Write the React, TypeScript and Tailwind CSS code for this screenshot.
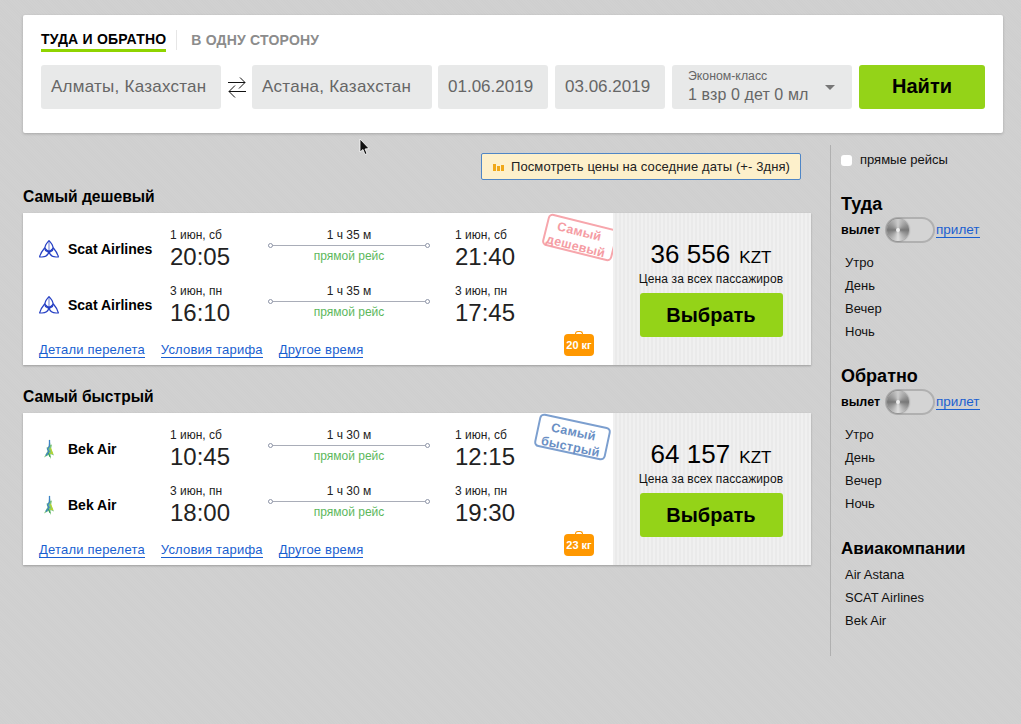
import React from 'react';

type Leg = {
  depDate: string;
  depTime: string;
  duration: string;
  arrDate: string;
  arrTime: string;
};

type Offer = {
  title: string;
  airline: string;
  logo: 'scat' | 'bek';
  legs: Leg[];
  price: string;
  baggage: string;
  stamp: string[];
  stampClass: string;
};

const offers: Offer[] = [
  {
    title: 'Самый дешевый',
    airline: 'Scat Airlines',
    logo: 'scat',
    price: '36 556',
    baggage: '20 кг',
    stamp: ['Самый', 'дешевый'],
    stampClass: 'rotate-[14deg] border-[#f7a6ac] text-[#f59ca3] left-[521px] top-[8px] w-[72px] h-[33px] pt-[5px] pr-[4px]',
    legs: [
      { depDate: '1 июн, сб', depTime: '20:05', duration: '1 ч 35 м', arrDate: '1 июн, сб', arrTime: '21:40' },
      { depDate: '3 июн, пн', depTime: '16:10', duration: '1 ч 35 м', arrDate: '3 июн, пн', arrTime: '17:45' },
    ],
  },
  {
    title: 'Самый быстрый',
    airline: 'Bek Air',
    logo: 'bek',
    price: '64 157',
    baggage: '23 кг',
    stamp: ['Самый', 'быстрый'],
    stampClass: 'rotate-[12deg] border-[#7c9fcf] text-[#6a8fc4] left-[513px] top-[7px] w-[73px] h-[34px] pt-[6px]',
    legs: [
      { depDate: '1 июн, сб', depTime: '10:45', duration: '1 ч 30 м', arrDate: '1 июн, сб', arrTime: '12:15' },
      { depDate: '3 июн, пн', depTime: '18:00', duration: '1 ч 30 м', arrDate: '3 июн, пн', arrTime: '19:30' },
    ],
  },
];

const ScatLogo = () => (
  <svg width="20" height="18" viewBox="0 0 20 18" fill="none" stroke="#2640c4" strokeWidth="1.2">
    <path d="M10 0.6 C13.4 4 14.8 8 13.4 10.6 L10 12.6 L6.6 10.6 C5.2 8 6.6 4 10 0.6 Z" />
    <path d="M10 12 L5.6 8 C3.4 10.6 1.4 13.6 0.6 16.8 C4.6 17.4 8.6 16.8 10 12 Z" />
    <path d="M10 12 L14.4 8 C16.6 10.6 18.6 13.6 19.4 16.8 C15.4 17.4 11.4 16.8 10 12 Z" />
    <path d="M10 1 V12 M6.6 10.6 L13.4 10.6" strokeWidth="0.7" />
  </svg>
);

const BekLogo = () => (
  <svg width="12" height="22" viewBox="0 0 12 22" fill="none">
    <path d="M6.5 1 L7.5 7 L9 6.5 L8 11 L11 17.5 L7.5 16 L8 21 L5.5 17 L1 19.5 L4.5 13 L3.5 9.5 L5.5 9 Z" fill="#7cc47a" />
    <path d="M6.5 2 L6.5 8 L4.5 11 L6 13.5 L3 17.5" stroke="#3d82c6" strokeWidth="1.3" />
    <path d="M7.5 10 L9.5 15.5 L6.5 15" stroke="#b8d62e" strokeWidth="1.2" />
    <path d="M5.5 15 L7 19" stroke="#2f9e62" strokeWidth="1" />
  </svg>
);

const SwapIcon = () => (
  <svg width="18" height="24" viewBox="0 0 18 24" fill="none" stroke="#111" strokeWidth="1">
    <path d="M0 7.5 H17 M12 2.5 L17 7.5 L11 13.5" />
    <path d="M18 16.5 H1 M7 10.5 L1 16.5 L7 22.5" />
  </svg>
);

const Cursor = () => (
  <svg className="absolute left-[359px] top-[138px]" width="12" height="18" viewBox="0 0 12 18">
    <path d="M1 1 L1 14 L4 11.5 L6 16.5 L8 15.5 L6 11 L10 10.5 Z" fill="#111" stroke="#fff" strokeWidth="0.8" />
  </svg>
);

const Baggage = ({ label }: { label: string }) => (
  <div className="absolute left-[541px] top-[121px] h-[22px] w-[30px] rounded-[4px] bg-[#ff9800] text-center text-[11px] leading-[23px] font-bold text-white">
    <span className="absolute left-[11px] top-[-3px] h-[4px] w-[8px] rounded-t-[3px] border border-b-0 border-[#ff9800]" />
    {label}
  </div>
);

const FlightRow = ({ offer, leg }: { offer: Offer; leg: Leg }) => (
  <div className="flex h-[56px] text-[#222]">
    <div className="flex h-[42px] w-[147px] items-center pl-[16px]">
      <div className="flex w-[29px] shrink-0 justify-center pr-[9px]">
        {offer.logo === 'scat' ? <ScatLogo /> : <BekLogo />}
      </div>
      <span className="text-[14px] leading-4 font-bold text-black">{offer.airline}</span>
    </div>
    <div className="w-[98px]">
      <div className="text-[12px] leading-[14px]">{leg.depDate}</div>
      <div className="mt-px text-[24px] leading-[28px]">{leg.depTime}</div>
    </div>
    <div className="w-[162px] text-center">
      <div className="text-[12px] leading-[14px]">{leg.duration}</div>
      <div className="relative mt-[3px] h-px bg-[#a9adb8]">
        <span className="absolute left-0 top-[-2px] size-[5px] rounded-full border border-[#8e95a8] bg-white" />
        <span className="absolute right-0 top-[-2px] size-[5px] rounded-full border border-[#8e95a8] bg-white" />
      </div>
      <div className="mt-[3px] text-[12px] leading-[14px] text-[#5cb85c]">прямой рейс</div>
    </div>
    <div className="ml-[25px]">
      <div className="text-[12px] leading-[14px]">{leg.arrDate}</div>
      <div className="mt-px text-[24px] leading-[28px]">{leg.arrTime}</div>
    </div>
  </div>
);

const OfferCard = ({ offer }: { offer: Offer }) => (
  <section className="mb-[22px]">
    <h2 className="mb-[7px] text-[15.6px] leading-[19px] font-bold text-black">{offer.title}</h2>
    <div className="flex h-[152px] overflow-hidden bg-white shadow-[0_1px_2px_rgba(0,0,0,0.25)]">
      <div className="relative w-[590px] overflow-hidden pt-[15px]">
        {offer.legs.map((leg) => (
          <FlightRow key={leg.depTime} offer={offer} leg={leg} />
        ))}
        <div className="ml-[16px] mt-[2px] flex gap-[16px] text-[13px] leading-[15px] tracking-[0.2px] text-[#1a5fd0]">
          <a className="border-b border-[#1a5fd0]">Детали перелета</a>
          <a className="border-b border-[#1a5fd0]">Условия тарифа</a>
          <a className="border-b border-[#1a5fd0]">Другое время</a>
        </div>
        <div
          className={`absolute flex flex-col items-center justify-center rounded-[5px] border-2 text-[12.5px] leading-[15px] font-bold tracking-[0.3px] ${offer.stampClass}`}
        >
          {offer.stamp.map((line) => (
            <span key={line}>{line}</span>
          ))}
        </div>
        <Baggage label={offer.baggage} />
      </div>
      <div className="flex w-[198px] flex-col items-center bg-[repeating-linear-gradient(90deg,#f0f0f0_0,#f0f0f0_2px,#eaeaea_2px,#eaeaea_4px)] pr-[2px] pt-[26px]">
        <div className="text-[26px] leading-[30px] text-black">
          {offer.price} <span className="ml-[2px] text-[17px]">KZT</span>
        </div>
        <div className="mt-[-2px] text-[12px] leading-[16px] tracking-[0.1px] text-[#111]">Цена за всех пассажиров</div>
        <button className="mt-[6px] h-[44px] w-[143px] rounded-[3px] bg-[#94d318] text-[20px] font-bold text-black">
          Выбрать
        </button>
      </div>
    </div>
  </section>
);

const Toggle = () => (
  <div className="ml-[5px] mr-[4px] h-[26px] w-[50px] rounded-full border-2 border-[#b0b0b0] bg-[#d4d4d4]">
    <div className="relative size-[22px] rounded-full bg-[conic-gradient(#ccc,#777_25%,#ddd_50%,#777_75%,#ccc)] shadow-[0_0_2px_rgba(0,0,0,0.6)]">
      <span className="absolute left-[9px] top-[9px] size-[4px] rounded-full bg-[#eee]" />
    </div>
  </div>
);

const TimeFilter = ({ title, className }: { title: string; className: string }) => (
  <div className={className}>
    <h3 className="text-[18px] leading-[21px] font-bold text-black">{title}</h3>
    <div className="mt-[2px] flex h-[26px] items-center text-[12.5px]">
      <b className="text-black">вылет</b>
      <Toggle />
      <a className="-ml-[3px] border-b border-[#1a5fd0] text-[13.5px] leading-[14px] text-[#1a5fd0]">прилет</a>
    </div>
    <ul className="mt-[8px] pl-[4px] text-[13px] leading-[23px] text-[#111]">
      <li>Утро</li>
      <li>День</li>
      <li>Вечер</li>
      <li>Ночь</li>
    </ul>
  </div>
);

const Field = ({ value, className }: { value: string; className: string }) => (
  <div className={`flex h-[44px] items-center rounded-[3px] bg-[#e8e9e9] pl-[10px] text-[17px] text-[#666] ${className}`}>
    {value}
  </div>
);

const App: React.FC = () => {
  return (
    <div
      className="relative flex h-[724px] flex-col overflow-hidden bg-[repeating-linear-gradient(45deg,#cfcfcf_0,#cfcfcf_1px,#d1d1d1_1px,#d1d1d1_2px)] px-[23px] pt-[15px]"
      style={{ fontFamily: '"Liberation Sans", Arial, sans-serif' }}
    >
      <div className="h-[118px] w-[980px] rounded-[2px] bg-white px-[18px] pt-[15px] shadow-[0_1px_3px_rgba(0,0,0,0.2)]">
        <div className="flex h-[21px] items-start text-[14px] leading-[22px] font-bold tracking-[0.2px]">
          <span className="border-b-[3px] border-[#8fd400] leading-[19px] text-black">ТУДА И ОБРАТНО</span>
          <span className="ml-[10px] mr-[14px] h-[20px] w-px bg-[#e6e6e6]" />
          <span className="leading-[20px] text-[#8c8c8c]">В ОДНУ СТОРОНУ</span>
        </div>
        <div className="mt-[14px] flex">
          <Field value="Алматы, Казахстан" className="w-[180px] tracking-[0.25px]" />
          <div className="flex w-[31px] items-center justify-center">
            <SwapIcon />
          </div>
          <Field value="Астана, Казахстан" className="w-[180px] tracking-[0.25px]" />
          <Field value="01.06.2019" className="ml-[6px] w-[110px]" />
          <Field value="03.06.2019" className="ml-[7px] w-[110px]" />
          <div className="relative ml-[7px] h-[44px] w-[180px] rounded-[3px] bg-[#e8e9e9] pl-[16px] pt-[4px] text-[#666]">
            <div className="text-[12.3px] leading-[14px]">Эконом-класс</div>
            <div className="mt-[2px] text-[16px] leading-[20px] tracking-[0.1px]">1 взр 0 дет 0 мл</div>
            <span className="absolute left-[153px] top-[20px] h-0 w-0 border-x-[5px] border-t-[5px] border-x-transparent border-t-[#777]" />
          </div>
          <button className="ml-[7px] h-[44px] w-[126px] rounded-[3px] bg-[#94d318] pb-[2px] text-[20px] font-bold text-black">
            Найти
          </button>
        </div>
      </div>

      <div className="mt-[12px] flex">
        <main className="w-[788px]">
          <div className="flex justify-end pr-[10px] pt-[8px]">
            <div className="flex h-[27px] w-[320px] items-center rounded-[2px] border border-[#4f86c6] bg-[#fdf0cb] pl-[11px] text-[13px] tracking-[0.1px] text-[#222]">
              <svg width="11" height="9" viewBox="0 0 11 9" className="mr-[7px]" fill="#f0a818">
                <rect x="0" y="2" width="3" height="7" />
                <rect x="4" y="4" width="3" height="5" />
                <rect x="8" y="3" width="3" height="6" />
              </svg>
              Посмотреть цены на соседние даты (+- 3дня)
            </div>
          </div>
          <div className="mt-[7px]">
            {offers.map((offer) => (
              <OfferCard key={offer.title} offer={offer} />
            ))}
          </div>
        </main>
        <aside className="ml-[19px] h-[511px] w-[173px] border-l border-[#b0b0b0] pl-[10px] pt-[8px]">
          <label className="flex h-[14px] items-center text-[13px] text-[#111]">
            <span className="mr-[8px] size-[11px] rounded-[3px] bg-white" />
            прямые рейсы
          </label>
          <TimeFilter title="Туда" className="mt-[27px]" />
          <TimeFilter title="Обратно" className="mt-[23px]" />
          <div className="mt-[23px]">
            <h3 className="text-[17px] leading-[21px] font-bold text-black">Авиакомпании</h3>
            <ul className="mt-[4px] pl-[4px] text-[13px] leading-[23px] text-[#111]">
              <li>Air Astana</li>
              <li>SCAT Airlines</li>
              <li>Bek Air</li>
            </ul>
          </div>
        </aside>
      </div>
      <Cursor />
    </div>
  );
};

export default App;
